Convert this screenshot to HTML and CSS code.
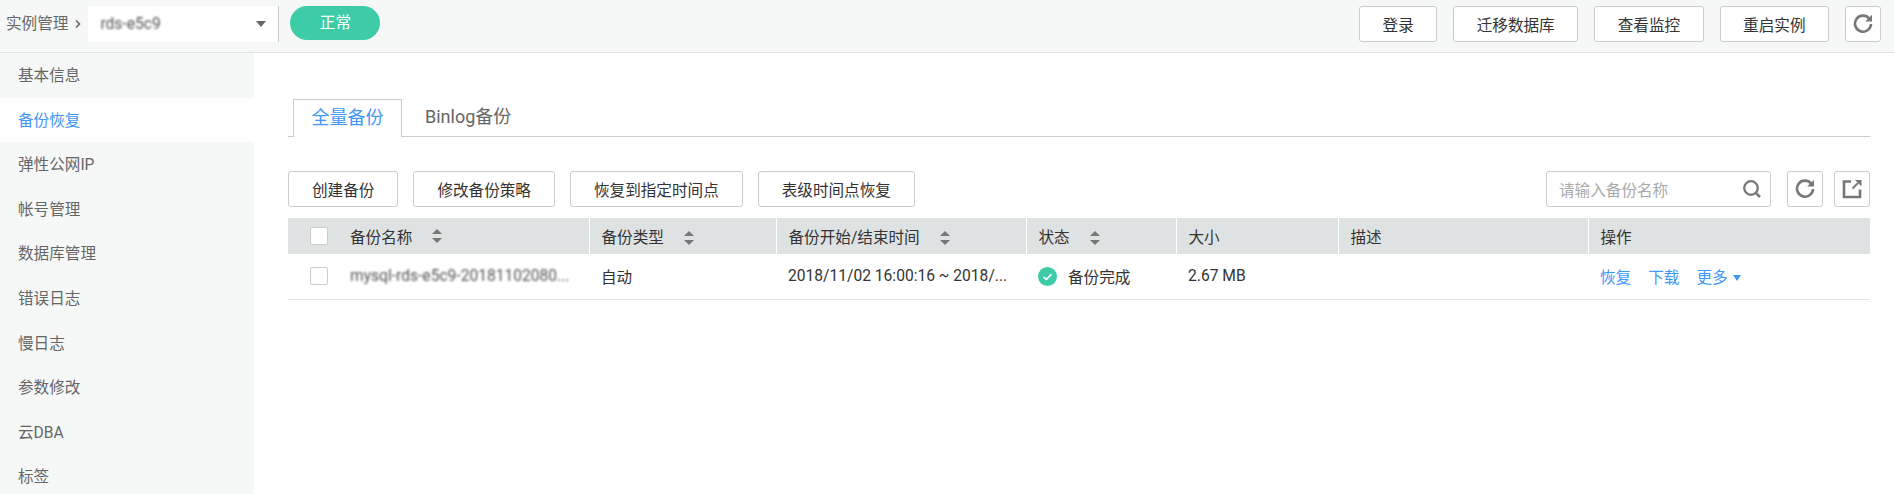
FILE: index.html
```html
<!DOCTYPE html>
<html lang="zh-CN">
<head>
    <meta charset="UTF-8">
    <title>备份恢复</title>
    <link rel="stylesheet" href="styles.css">
</head>
<body>

<header class="topbar">
    <span class="crumb">实例管理</span>
    <svg class="crumb-arrow" width="6" height="10" viewBox="0 0 6 10"><path d="M1 1.5 4.5 5 1 8.5" fill="none" stroke="#666" stroke-width="1.6"/></svg>
    <div class="instance-select">
        <span class="blurred">rds-e5c9</span>
        <span class="caret"></span>
    </div>
    <span class="status-pill">正常</span>
    <div class="topbar-actions">
        <button class="btn">登录</button>
        <button class="btn">迁移数据库</button>
        <button class="btn">查看监控</button>
        <button class="btn">重启实例</button>
        <button class="btn-icon">
            <svg width="22" height="22" viewBox="0 0 22 22"><path d="M17.2 5.6A8 8 0 1 0 19 11" fill="none" stroke="#777" stroke-width="2.6"/><path d="M20 1.8V8.6H13.2z" fill="#777"/></svg>
        </button>
    </div>
</header>

<div class="layout">
    <nav class="sidebar">
        <a class="nav-item">基本信息</a>
        <a class="nav-item active">备份恢复</a>
        <a class="nav-item">弹性公网IP</a>
        <a class="nav-item">帐号管理</a>
        <a class="nav-item">数据库管理</a>
        <a class="nav-item">错误日志</a>
        <a class="nav-item">慢日志</a>
        <a class="nav-item">参数修改</a>
        <a class="nav-item">云DBA</a>
        <a class="nav-item">标签</a>
    </nav>

    <main class="content">
        <div class="tabs">
            <span class="tab active">全量备份</span>
            <span class="tab">Binlog备份</span>
        </div>

        <div class="toolbar">
            <button class="btn">创建备份</button>
            <button class="btn">修改备份策略</button>
            <button class="btn">恢复到指定时间点</button>
            <button class="btn">表级时间点恢复</button>
            <div class="toolbar-right">
                <div class="search">
                    <span class="search-text">请输入备份名称</span>
                    <svg width="20" height="20" viewBox="0 0 20 20"><circle cx="9" cy="9" r="6.8" fill="none" stroke="#777" stroke-width="2.3"/><path d="M13.8 13.8 18 18" stroke="#777" stroke-width="2.6"/></svg>
                </div>
                <button class="btn-icon">
                    <svg width="22" height="22" viewBox="0 0 22 22"><path d="M17.2 5.6A8 8 0 1 0 19 11" fill="none" stroke="#777" stroke-width="2.6"/><path d="M20 1.8V8.6H13.2z" fill="#777"/></svg>
                </button>
                <button class="btn-icon">
                    <svg width="22" height="22" viewBox="0 0 22 22"><path d="M10 3.5H3V19H19V11.5" fill="none" stroke="#777" stroke-width="2.6"/><path d="M11.5 10.5 17 5" stroke="#777" stroke-width="1.8"/><path d="M14 2H20.5V8.5z" fill="#777"/></svg>
                </button>
            </div>
        </div>

        <table class="backups">
            <colgroup>
                <col class="col-name"><col class="col-type"><col class="col-time"><col class="col-status"><col class="col-size"><col class="col-desc"><col>
            </colgroup>
            <thead>
                <tr>
                    <th><div class="name-cell"><span class="checkbox"></span>备份名称<span class="sort"></span></div></th>
                    <th>备份类型<span class="sort"></span></th>
                    <th>备份开始/结束时间<span class="sort"></span></th>
                    <th>状态<span class="sort"></span></th>
                    <th>大小</th>
                    <th>描述</th>
                    <th>操作</th>
                </tr>
            </thead>
            <tbody>
                <tr>
                    <td><div class="name-cell"><span class="checkbox"></span><span class="blurred">mysql-rds-e5c9-20181102080...</span></div></td>
                    <td>自动</td>
                    <td>2018/11/02 16:00:16 ~ 2018/...</td>
                    <td>
                        <span class="status">
                            <svg width="19" height="19" viewBox="0 0 19 19"><circle cx="9.5" cy="9.5" r="9.5" fill="#3dcca6"/><path d="M5.5 9.8 8.4 12.4 13.6 7.2" fill="none" stroke="#fff" stroke-width="1.7"/></svg>
                            备份完成
                        </span>
                    </td>
                    <td>2.67 MB</td>
                    <td></td>
                    <td><a class="link">恢复</a><a class="link">下载</a><a class="link">更多<span class="link-caret"></span></a></td>
                </tr>
            </tbody>
        </table>
    </main>
</div>

</body>
</html>
```

FILE: styles.css
```css
* {
    box-sizing: border-box;
}
html, body {
    height: 100%;
}
body {
    margin: 0;
    overflow: hidden;
    background-color: #fff;
    color: #333;
    font-family: Roboto, "Noto Sans CJK SC", sans-serif;
    font-size: 15.6px;
}
button {
    font-family: inherit;
    font-size: inherit;
    color: inherit;
    cursor: pointer;
}
.blurred {
    color: #555;
    filter: blur(1px);
}

/* top bar */
.topbar {
    display: flex;
    align-items: flex-start;
    height: 53px;
    padding: 6px 13px 0 6px;
    background-color: #f6f8f8;
    border-bottom: 1px solid #e0e3e3;
}
.crumb {
    line-height: 36px;
    color: #666;
}
.crumb-arrow {
    margin: 13px 7px 0 7px;
}
.instance-select {
    display: flex;
    align-items: center;
    justify-content: space-between;
    width: 191px;
    height: 36px;
    padding: 0 12px;
    background-color: #fff;
    border-right: 1px solid #ccc;
}
.caret {
    width: 0;
    height: 0;
    border-left: 5.5px solid transparent;
    border-right: 5.5px solid transparent;
    border-top: 6px solid #666;
}
.status-pill {
    width: 90px;
    height: 34px;
    margin-left: 11px;
    line-height: 34px;
    text-align: center;
    color: #fff;
    background-color: #3dcca6;
    border-radius: 17px;
}
.topbar-actions {
    display: flex;
    gap: 16px;
    margin-left: auto;
}
.btn {
    height: 36px;
    padding: 0 23px;
    background-color: #fff;
    border: 1px solid #ccc;
    border-radius: 3px;
    white-space: nowrap;
}
.topbar-actions .btn {
    padding: 0 22.5px;
}
.btn-icon {
    display: flex;
    align-items: center;
    justify-content: center;
    width: 36px;
    height: 36px;
    padding: 0;
    background-color: #fff;
    border: 1px solid #ccc;
    border-radius: 3px;
}

/* sidebar + content */
.layout {
    display: flex;
    height: 441px;
}
.sidebar {
    flex: none;
    width: 254px;
    background-color: #f6f8f8;
    overflow: hidden;
}
.nav-item {
    display: block;
    height: 44.6px;
    padding: 1px 0 0 18px;
    line-height: 44.6px;
    color: #666;
}
.nav-item.active {
    background-color: #fff;
    color: #3f97f8;
}
.content {
    flex: 1;
    padding: 46px 24px 0 34px;
}

/* tabs */
.tabs {
    display: flex;
    height: 38px;
    padding-left: 5px;
    border-bottom: 1px solid #ccc;
}
.tab {
    height: 38px;
    padding: 0 17.5px;
    line-height: 36px;
    font-size: 18px;
    color: #666;
}
.tab.active {
    color: #3f97f8;
    background-color: #fff;
    border: 1px solid #ccc;
    border-bottom: none;
}
.tab + .tab {
    padding-left: 23px;
}

/* toolbar */
.toolbar {
    display: flex;
    gap: 15px;
    margin-top: 34px;
}
.toolbar-right {
    display: flex;
    gap: 11px;
    margin-left: auto;
}
.search {
    display: flex;
    align-items: center;
    justify-content: space-between;
    width: 225px;
    height: 36px;
    margin-right: 5px;
    padding: 0 8px 0 12px;
    background-color: #fff;
    border: 1px solid #ccc;
    border-radius: 3px;
}
.search-text {
    color: #aaa;
}

/* table */
.backups {
    width: 100%;
    margin-top: 11px;
    border-collapse: collapse;
    table-layout: fixed;
}
.col-name { width: 301px; }
.col-type { width: 187px; }
.col-time { width: 250px; }
.col-status { width: 150px; }
.col-size { width: 162px; }
.col-desc { width: 250px; }
.backups th {
    height: 36px;
    padding: 0 0 0 12px;
    background-color: #dfe2e3;
    border-right: 1px solid #fff;
    font-weight: normal;
    text-align: left;
    white-space: nowrap;
}
.backups th:last-child {
    border-right: none;
}
.backups td {
    height: 45px;
    padding: 0 0 0 12px;
    border-bottom: 1px solid #e3e5e5;
    white-space: nowrap;
}
.backups th:first-child, .backups td:first-child {
    padding: 0;
}
.name-cell {
    display: flex;
    align-items: center;
    padding-left: 22px;
}
.checkbox {
    flex: none;
    width: 18px;
    height: 18px;
    margin-right: 22px;
    background-color: #fff;
    border: 1px solid #ccc;
    border-radius: 2px;
}
.sort {
    display: inline-block;
    position: relative;
    width: 10px;
    height: 14px;
    margin-left: 20px;
    vertical-align: -2px;
}
.sort::before, .sort::after {
    content: "";
    position: absolute;
    left: 0;
    border-left: 5px solid transparent;
    border-right: 5px solid transparent;
}
.sort::before {
    top: 0;
    border-bottom: 5.5px solid #777;
}
.sort::after {
    bottom: 0;
    border-top: 5.5px solid #777;
}
.status {
    display: flex;
    align-items: center;
    gap: 11px;
}
.link {
    margin-right: 17px;
    color: #3f97f8;
    cursor: pointer;
}
.link-caret {
    display: inline-block;
    width: 0;
    height: 0;
    margin-left: 5px;
    vertical-align: 2px;
    border-left: 4.5px solid transparent;
    border-right: 4.5px solid transparent;
    border-top: 6px solid #3f97f8;
}
```
